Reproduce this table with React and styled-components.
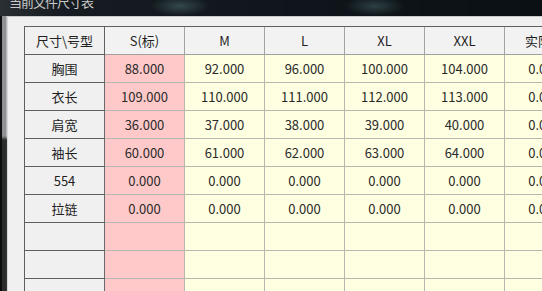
import React from 'react';
import styled, { createGlobalStyle } from 'styled-components';

const Global = createGlobalStyle`
  html, body {
    margin: 0;
    padding: 0;
    background: #0c1115;
  }
`;

const sizes = ['S(标)', 'M', 'L', 'XL', 'XXL', '实际值'];

const rows = [
  { name: '胸围', values: ['88.000', '92.000', '96.000', '100.000', '104.000', '0.000'] },
  { name: '衣长', values: ['109.000', '110.000', '111.000', '112.000', '113.000', '0.000'] },
  { name: '肩宽', values: ['36.000', '37.000', '38.000', '39.000', '40.000', '0.000'] },
  { name: '袖长', values: ['60.000', '61.000', '62.000', '63.000', '64.000', '0.000'] },
  { name: '554', values: ['0.000', '0.000', '0.000', '0.000', '0.000', '0.000'] },
  { name: '拉链', values: ['0.000', '0.000', '0.000', '0.000', '0.000', '0.000'] },
  { name: '', values: ['', '', '', '', '', ''] },
  { name: '', values: ['', '', '', '', '', ''] },
  { name: '', values: ['', '', '', '', '', ''] },
  { name: '', values: ['', '', '', '', '', ''] },
];

const App = () => {
  return (
    <Window>
      <Global />
      <TitleBar>
        <Title>当前文件尺寸表</Title>
      </TitleBar>
      <Body>
        <LeftStrip />
        <Panel>
          <Grid>
            <HeadCell $first>尺寸\号型</HeadCell>
            {sizes.map((s) => (
              <HeadCell key={s}>{s}</HeadCell>
            ))}
            {rows.map((r, i) => (
              <React.Fragment key={i}>
                <RowHead>{r.name}</RowHead>
                {r.values.map((v, j) => (
                  <Cell key={j} $base={j === 0}>{v}</Cell>
                ))}
              </React.Fragment>
            ))}
          </Grid>
        </Panel>
      </Body>
    </Window>
  );
};

const Window = styled.div`
  width: 542px;
  height: 291px;
  overflow: hidden;
  display: flex;
  flex-direction: column;
  background: #0c1115;
  font-family: "Noto Sans CJK SC", "Noto Sans", sans-serif;
`;

const TitleBar = styled.div`
  height: 16px;
  flex: none;
  padding-left: 9px;
  overflow: hidden;
  background:
    radial-gradient(ellipse 30px 10px at 180px 6px, rgba(90, 130, 130, 0.45), transparent),
    radial-gradient(ellipse 30px 10px at 375px 6px, rgba(90, 130, 130, 0.4), transparent),
    linear-gradient(to right, #2a2f33 0, #161c21 60px, #0f151a 300px, #0b1014 100%);
`;

const Title = styled.div`
  margin-top: -5px;
  font-size: 13px;
  line-height: 13px;
  letter-spacing: -1px;
  color: #c8c8c8;
  white-space: nowrap;
`;

const Body = styled.div`
  flex: 1;
  display: flex;
  min-height: 0;
`;

const LeftStrip = styled.div`
  width: 7px;
  flex: none;
  background:
    linear-gradient(to bottom, transparent 0, transparent 120px, rgba(10, 10, 10, 0.75) 124px, rgba(10, 10, 10, 0.75) 100%),
    linear-gradient(to right, #101214 0 2px, #8e9292 2px 6px, #b8b8b8 6px);
`;

const Panel = styled.div`
  flex: 1;
  min-width: 0;
  background: #f0f0f0;
  border-top: 1px solid #c9c9c9;
  border-left: 1px solid #d6d6d6;
  padding: 9px 0 0 16px;
  overflow: hidden;
`;

const Grid = styled.div`
  display: grid;
  grid-template-columns: repeat(7, 80px);
  grid-auto-rows: 28px;
  width: 560px;
  border-left: 1px solid #5f5f5f;
  border-top: 1px solid #5f5f5f;
  font-size: 13px;
`;

const HeadCell = styled.div`
  display: flex;
  align-items: center;
  justify-content: center;
  background: ${(p) => (p.$first ? '#f0f0f0' : '#f2f2f2')};
  border-right: 1px solid ${(p) => (p.$first ? '#5f5f5f' : '#a3a3a3')};
  border-bottom: 1px solid ${(p) => (p.$first ? '#5f5f5f' : '#a0a0a0')};
  color: #1e1e1e;
  white-space: nowrap;
`;

const RowHead = styled.div`
  display: flex;
  align-items: center;
  justify-content: center;
  background: #f0f0f0;
  border-right: 1px solid #6a6a6a;
  border-bottom: 1px solid #5f5f5f;
  color: #1e1e1e;
`;

const Cell = styled.div`
  display: flex;
  align-items: center;
  justify-content: center;
  background: ${(p) => (p.$base ? '#ffc9c9' : '#ffffe1')};
  border-right: 1px solid #b8b8b0;
  border-bottom: 1px solid #b8b8b0;
  color: #2a2a2a;
  white-space: nowrap;
`;

export default App;
